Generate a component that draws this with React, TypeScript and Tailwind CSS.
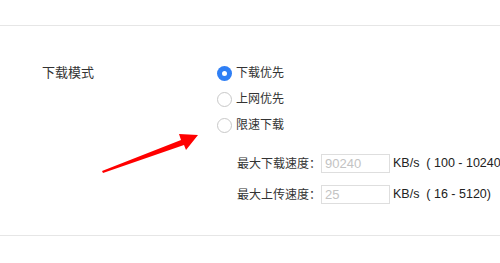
const font = "font-['Liberation_Sans','Noto_Sans_CJK_SC',sans-serif]";

const Radio = ({ checked, label }: { checked?: boolean; label: string }) => (
  <label className="flex h-[26px] items-center gap-[4px]">
    {checked ? (
      <span className="flex h-[15px] w-[15px] items-center justify-center rounded-full bg-[#2f7ff5]">
        <span className="h-[5px] w-[5px] rounded-full bg-white" />
      </span>
    ) : (
      <span className="h-[15px] w-[15px] rounded-full border border-[#c8c8c8] bg-white" />
    )}
    <span className="text-[12px] text-[#333]">{label}</span>
  </label>
);

const SpeedRow = ({ label, value, range }: { label: string; value: string; range: string }) => (
  <div className="flex h-[19px] items-center">
    <span className="w-[84px] shrink-0 text-[12px] text-[#333]">{label}</span>
    <div className="flex h-[19px] w-[69px] shrink-0 items-center border border-[#dedede] pl-[3px] text-[13px] text-[#c3c3c3]">
      {value}
    </div>
    <span className="ml-[3px] shrink-0 whitespace-pre text-[12.5px] text-[#222]">{range}</span>
  </div>
);

const App = () => {
  return (
    <div className={`relative h-[263px] w-[500px] overflow-hidden bg-white ${font}`}>
      <div className="h-[25px]" />
      <div className="flex h-[211px] border-y border-[#e6e6e6]">
        <div className="w-[217px] shrink-0 pl-[42px] pt-[37px] text-[13px] leading-[20px] text-[#333]">
          下载模式
        </div>
        <div className="flex shrink-0 flex-col pt-[34px]">
          <Radio checked label="下载优先" />
          <Radio label="上网优先" />
          <Radio label="限速下载" />
          <div className="ml-[20px] mt-[16px] flex flex-col gap-[12px]">
            <SpeedRow label="最大下载速度：" value="90240" range="KB/s  ( 100 - 10240)" />
            <SpeedRow label="最大上传速度：" value="25" range="KB/s  ( 16 - 5120)" />
          </div>
        </div>
      </div>
      <svg className="absolute left-0 top-0" width="500" height="263" viewBox="0 0 500 263">
        <polygon
          points="102,171 181,140 179,134 198,135 186,150 184,145 103,173"
          fill="#ff0000"
        />
      </svg>
    </div>
  );
};

export default App;
